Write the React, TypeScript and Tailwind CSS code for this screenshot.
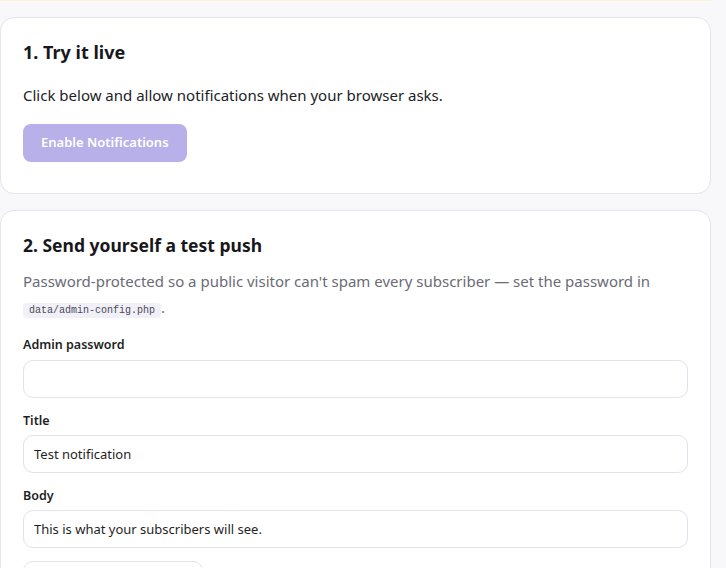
export default function App() {
  const font = { fontFamily: '"Noto Sans", "Open Sans", sans-serif' };
  return (
    <div className="min-h-screen bg-[#f8f8fb] pr-[15px]" style={font}>
      <div className="h-px bg-[#fdf1dc]" />
      <div className="pt-4">
        <section className="rounded-[14px] border border-[#e4e4ea] bg-white px-[22px] pt-[22px] pb-[31px]">
          <h2 className="text-[18px] leading-6 font-bold text-[#18181c]">1. Try it live</h2>
          <p className="mt-[19px] text-[15px] leading-6 text-[#222226]">
            Click below and allow notifications when your browser asks.
          </p>
          <button className="mt-[17px] h-[38px] rounded-[8px] bg-[#b8b0e8] px-[18px] text-[13px] font-semibold text-white">
            Enable Notifications
          </button>
        </section>
        <section className="mt-4 rounded-[14px] border border-[#e4e4ea] bg-white px-[22px] pt-[22px] pb-[30px]">
          <h2 className="text-[17.5px] leading-6 font-bold text-[#18181c]">2. Send yourself a test push</h2>
          <p className="mt-[11px] text-[15px] leading-[26px] text-[#6b6b76]">
            Password-protected so a public visitor can't spam every subscriber — set the password in{" "}
            <code
              className="rounded-[4px] bg-[#f1eff7] px-[6px] py-[2px] text-[10px] text-[#4a4a55]"
              style={{ fontFamily: '"Liberation Mono", monospace' }}
            >
              data/admin-config.php
            </code>
            .
          </p>
          <div className="mt-[11px]">
            <label className="block text-[12.5px] leading-5 font-semibold text-[#1f1f24]">Admin password</label>
            <input
              type="password"
              className="mt-[5px] block h-[38px] w-full rounded-[10px] border border-[#e2e2e8] px-[10px] text-[13px] outline-none"
            />
          </div>
          <div className="mt-[13px]">
            <label className="block text-[12.5px] leading-5 font-semibold text-[#1f1f24]">Title</label>
            <input
              defaultValue="Test notification"
              className="mt-1 block h-[38px] w-full rounded-[10px] border border-[#e2e2e8] px-[10px] text-[13px] text-[#1f1f24] outline-none"
              style={font}
            />
          </div>
          <div className="mt-[13px]">
            <label className="block text-[12.5px] leading-5 font-semibold text-[#1f1f24]">Body</label>
            <input
              defaultValue="This is what your subscribers will see."
              className="mt-1 block h-[38px] w-full rounded-[10px] border border-[#e2e2e8] px-[10px] text-[13px] text-[#1f1f24] outline-none"
              style={font}
            />
          </div>
          <div className="mt-[13px] h-[38px] w-[180px] rounded-[10px] border border-[#e2e2e8] bg-white" />
        </section>
      </div>
    </div>
  );
}
